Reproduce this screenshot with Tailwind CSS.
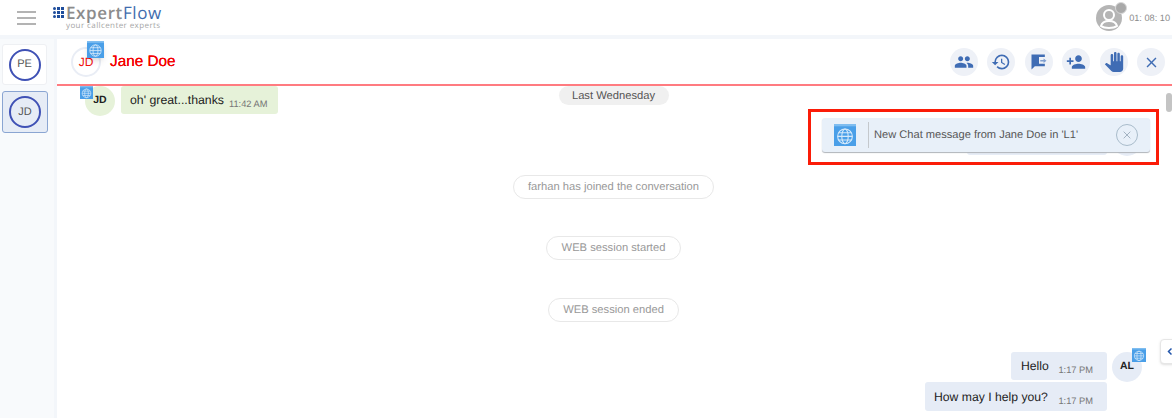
<!DOCTYPE html>
<html>
<head>
<meta charset="utf-8">
<script src="https://cdn.jsdelivr.net/npm/@tailwindcss/browser@4"></script>
</head>
<body class="w-[1172px] h-[418px] overflow-hidden bg-white font-['Liberation_Sans',sans-serif] relative [text-rendering:geometricPrecision]">
<svg class="hidden">
  <symbol id="globe" viewBox="0 0 24 24">
    <rect width="24" height="24" fill="#4a9fe8"/>
    <rect width="24" height="2.500" fill="#7fbdf0"/>
    <g fill="none" stroke="#d5e9fa" stroke-width="1.200">
      <circle cx="12" cy="13.500" r="8"/>
      <ellipse cx="12" cy="13.500" rx="3.500" ry="8"/>
      <path d="M4 13.500h16M5 9.500h14M5 17.500h14"/>
    </g>
  </symbol>
</svg>
<header class="h-[35px] flex items-center bg-white">
  <div class="w-[53px] pl-[17px] flex flex-col gap-[4px]">
    <span class="block w-[19px] h-[2px] bg-[#b3b3b3]"></span>
    <span class="block w-[19px] h-[2px] bg-[#b3b3b3]"></span>
    <span class="block w-[19px] h-[2px] bg-[#b3b3b3]"></span>
  </div>
  <div class="flex flex-col h-full pt-[4px]">
    <div class="flex items-center h-[17px]">
      <div class="grid grid-cols-[3px_3px_3px] gap-[1px] w-[12px] mr-[1px]">
        <i class="h-[3px] rounded-full bg-[#1f4e9c]"></i><i class="h-[3px] bg-[#1f4e9c]"></i><i class="h-[3px] bg-[#1f4e9c]"></i>
        <i class="h-[3px] rounded-full bg-[#1f4e9c]"></i><i class="h-[3px] bg-[#1f4e9c]"></i><i class="h-[3px] bg-[#1f4e9c]"></i>
        <i class="h-[3px] rounded-full bg-[#1f4e9c]"></i><i class="h-[3px] bg-[#1f4e9c]"></i><i class="h-[3px] bg-[#1f4e9c]"></i>
      </div>
      <span class="text-[17px] leading-none tracking-[0.6px] font-semibold font-['Open_Sans',sans-serif] text-[#8c8c8c]">Expert<span class="font-normal text-[#3f6cae]">Flow</span></span>
    </div>
    <span class="ml-[13px] text-[8px] leading-[10px] tracking-[0.4px] text-[#a6a6a6] font-['Open_Sans',sans-serif]">your callcenter experts</span>
  </div>
  <div class="ml-auto flex items-center pr-[2px]">
    <div class="relative w-[26px] h-[26px] rounded-full bg-[#b5b5b5] mr-[7px] mt-[1px]">
      <svg viewBox="0 0 26 26" class="w-[26px] h-[26px]"><circle cx="13" cy="10" r="5" fill="none" stroke="#fff" stroke-width="2"/><path d="M5 21c1-4 5-5 8-5s7 1 8 5c-2 1.500-5 2-8 2s-6-.5-8-2z" fill="none" stroke="#fff" stroke-width="2"/></svg>
      <span class="absolute -top-[3px] right-[-5px] w-[12px] h-[12px] rounded-full bg-[#a9a9a9] border border-[#d8d8d8]"></span>
    </div>
    <span class="text-[9.200px] text-[#8a8a8a] mt-[3px]">01: 08: 10</span>
  </div>
</header>
<div class="flex h-[383px] bg-[#f3f6fa] pt-[4px]">
  <aside class="w-[54px] shrink-0 flex flex-col gap-[6px] pl-[2px] pr-[5px] pt-[5px] bg-[#f8fafc]">
    <div class="h-[41px] w-[45px] flex items-center justify-center rounded-[3px] bg-white border border-[#eef0f3]">
      <span class="w-[32px] h-[32px] rounded-full border-2 border-[#3f51b5] flex items-center justify-center text-[11px] text-[#555]">PE</span>
    </div>
    <div class="h-[42px] w-[46px] flex items-center justify-center rounded-[3px] bg-[#e6ecf6] border border-[#8aa5d2]">
      <span class="w-[32px] h-[32px] rounded-full border-2 border-[#3f51b5] flex items-center justify-center text-[11px] text-[#555]">JD</span>
    </div>
  </aside>
  <main class="flex-1 bg-white ml-[3px] relative flex flex-col min-w-0">
    <div class="h-[47px] shrink-0 border-b-2 border-[#ff7b80] flex items-center pt-[1px] pl-[14px] pr-[7px] relative">
      <div class="relative w-[30px] h-[30px] rounded-full border-2 border-[#e9edf5] flex items-center justify-center text-[12px] text-[#f01010]">JD
        <svg class="absolute -top-[8px] left-[14px] w-[17px] h-[17px] shadow-md"><use href="#globe"/></svg>
      </div>
      <span class="ml-[9px] mt-[1px] text-[15.300px] text-[#f40000] [text-shadow:0_0_0.6px_#f40000]">Jane Doe</span>
      <div class="ml-auto flex gap-[9.500px]">
        <button class="w-[28px] h-[28px] rounded-full bg-[#eef1f7] flex items-center justify-center">
          <svg viewBox="0 0 24 24" class="w-[20px] h-[20px]" fill="#3f6cb4"><path d="M16 11c1.660 0 3-1.340 3-3s-1.340-3-3-3-3 1.340-3 3 1.340 3 3 3zm-8 0c1.660 0 3-1.340 3-3S9.660 5 8 5 5 6.340 5 8s1.340 3 3 3zm0 2c-2.330 0-7 1.170-7 3.500V19h14v-2.500C15 14.170 10.330 13 8 13zm8 0c-.29 0-.62.02-.97.05 1.160.84 1.970 1.970 1.970 3.450V19h6v-2.500c0-2.330-4.670-3.500-7-3.500z"/></svg>
        </button>
        <button class="w-[28px] h-[28px] rounded-full bg-[#eef1f7] flex items-center justify-center">
          <svg viewBox="0 0 24 24" class="w-[20px] h-[20px]" fill="#3f6cb4"><path d="M13 3a9 9 0 0 0-9 9H1l3.890 3.890.07.14L9 12H6c0-3.870 3.130-7 7-7s7 3.130 7 7-3.130 7-7 7c-1.930 0-3.680-.79-4.940-2.060l-1.420 1.420A8.954 8.954 0 0 0 13 21a9 9 0 0 0 0-18zm-1 5v5l4.280 2.540.72-1.210-3.500-2.080V8H12z"/></svg>
        </button>
        <button class="w-[28px] h-[28px] rounded-full bg-[#eef1f7] flex items-center justify-center">
          <svg viewBox="0 0 24 24" class="w-[20px] h-[20px]" fill="#3f6cb4"><path d="M3 3h16v3H12v8h7v3H7l-4 4z"/><path d="M13.500 9.700h4V7.800l3.500 2.700-3.500 2.700v-1.900h-4z" fill="#7f9fd0"/></svg>
        </button>
        <button class="w-[28px] h-[28px] rounded-full bg-[#eef1f7] flex items-center justify-center">
          <svg viewBox="0 0 24 24" class="w-[20px] h-[20px]" fill="#3f6cb4"><path d="M15 12c2.210 0 4-1.790 4-4s-1.790-4-4-4-4 1.790-4 4 1.790 4 4 4zm-9-2V7H4v3H1v2h3v3h2v-3h3v-2H6zm9 4c-2.670 0-8 1.340-8 4v2h16v-2c0-2.660-5.330-4-8-4z"/></svg>
        </button>
        <button class="w-[28px] h-[28px] rounded-full bg-[#eef1f7] flex items-center justify-center">
          <svg viewBox="0 0 24 24" class="w-[20px] h-[20px]" fill="#3f6cb4"><path d="M23 5.500V20c0 2.200-1.800 4-4 4h-7.300c-1.080 0-2.100-.43-2.850-1.190L1 14.830s1.260-1.230 1.300-1.250c.22-.19.490-.29.790-.29.220 0 .42.060.6.160.04.010 4.310 2.460 4.310 2.460V4c0-.83.670-1.500 1.500-1.500S11 3.170 11 4v7h1V1.500c0-.83.670-1.500 1.500-1.500S15 .67 15 1.500V11h1V2.500c0-.83.670-1.500 1.500-1.500s1.500.67 1.500 1.500V11h1V5.500c0-.83.670-1.500 1.500-1.500s1.500.67 1.500 1.500z"/></svg>
        </button>
        <button class="w-[28px] h-[28px] rounded-full bg-[#eef1f7] flex items-center justify-center">
          <svg viewBox="0 0 24 24" class="w-[17px] h-[17px]" fill="#3f6cb4"><path d="M19 6.410 17.590 5 12 10.590 6.410 5 5 6.410 10.590 12 5 17.590 6.410 19 12 13.410 17.590 19 19 17.590 13.410 12z"/></svg>
        </button>
      </div>
    </div>
    <div class="flex-1 relative overflow-hidden">
      <div class="flex flex-col items-center pr-[2px]">
        <div class="h-[19px] w-[110px] pt-[2px] rounded-full bg-[#f0f0f0] flex items-center justify-center text-[11.200px] text-[#555]">Last Wednesday</div>
        <div class="h-[24px] w-[201px] mt-[70px] pt-[1px] rounded-full border border-[#e8e8e8] flex items-center justify-center text-[11.200px] text-[#999]">farhan has joined the conversation</div>
        <div class="h-[24px] w-[135px] mt-[37px] pt-[1px] rounded-full border border-[#e8e8e8] flex items-center justify-center text-[11.200px] text-[#999]">WEB session started</div>
        <div class="h-[24px] w-[131px] mt-[38px] pt-[1px] rounded-full border border-[#e8e8e8] flex items-center justify-center text-[11.200px] text-[#999]">WEB session ended</div>
      </div>
      <div class="absolute left-[28px] top-0 flex">
        <div class="relative w-[30px] h-[30px] rounded-full bg-[#e6f2d9] flex items-center justify-center text-[10.500px] font-bold text-[#222]">JD
          <svg class="absolute top-0 -left-[5px] w-[13px] h-[13px]"><use href="#globe"/></svg>
        </div>
        <div class="ml-[6px] h-[28px] w-[157px] rounded-[3px] bg-[#e6f2d9] flex items-center pl-[9px]">
          <span class="text-[12.300px] text-[#222]">oh' great...thanks</span>
          <span class="text-[9.300px] text-[#777] ml-[5px] mt-[9px]">11:42 AM</span>
        </div>
      </div>
      <div class="absolute right-[65px] top-[266px] flex flex-col items-end gap-[2px]">
        <div class="h-[28px] w-[96px] rounded-[3px] bg-[#e6ecf6] flex items-center justify-between pl-[10px] pr-[14px]">
          <span class="text-[12.200px] text-[#222]">Hello</span>
          <span class="text-[9.300px] text-[#777] mt-[10px]">1:17 PM</span>
        </div>
        <div class="h-[29px] w-[182px] rounded-[3px] bg-[#e6ecf6] flex items-center justify-between pl-[9px] pr-[14px]">
          <span class="text-[12.200px] text-[#222] mt-[1px]">How may I help you?</span>
          <span class="text-[9.300px] text-[#777] mt-[10px]">1:17 PM</span>
        </div>
      </div>
      <div class="absolute left-[1055px] top-[266px] w-[30px] h-[30px] rounded-full bg-[#e6ecf6] flex items-center justify-center text-[10.500px] font-bold text-[#222]">AL
        <svg class="absolute -top-[4px] right-[-4px] w-[14px] h-[14px]"><use href="#globe"/></svg>
      </div>
      <div class="absolute left-[910px] top-[54px] w-[140px] h-[15px] rounded-[3px] bg-[#e6ecf6]"></div>
      <div class="absolute left-[1055px] top-[40px] w-[30px] h-[30px] rounded-full bg-[#e6ecf6]"></div>
      <div class="absolute left-[765px] top-[32px] w-[328px] h-[34px] rounded-[3px] bg-[#e8f0f9] shadow-[0_1px_1px_#b0b4ba] flex items-center text-[#555]">
        <svg class="ml-[12px] w-[22px] h-[22px] shrink-0"><use href="#globe"/></svg>
        <span class="ml-[12px] w-px h-[26px] bg-[#c4c8cc]"></span>
        <span class="ml-[5px] text-[11.100px]">New Chat message from Jane Doe in 'L1'</span>
        <span class="absolute right-[12px] top-[6px] w-[22px] h-[22px] rounded-full border border-[#a9bccb] flex items-center justify-center">
          <svg viewBox="0 0 12 12" class="w-[10px] h-[10px]" stroke="#a3b3c2" stroke-width="1.200"><path d="M2 2l8 8M10 2l-8 8"/></svg>
        </span>
      </div>
      <div class="absolute left-[751px] top-[23px] w-[351px] h-[56px] border-[3px] border-[#fb1c08]"></div>
      <div class="absolute left-[1109px] top-[7px] w-[6px] h-[19px] rounded-full bg-[#c4c4c4]"></div>
      <div class="absolute left-[1103px] top-[253px] w-[14px] h-[25px] bg-white rounded-l-[4px] border border-[#e6e6e6] flex items-center justify-end shadow-sm">
        <svg viewBox="0 0 8 10" class="w-[6px] h-[9px]"><path d="M6 1 2 5l4 4" fill="none" stroke="#2255aa" stroke-width="2"/></svg>
      </div>
    </div>
  </main>
</div>
</body>
</html>
